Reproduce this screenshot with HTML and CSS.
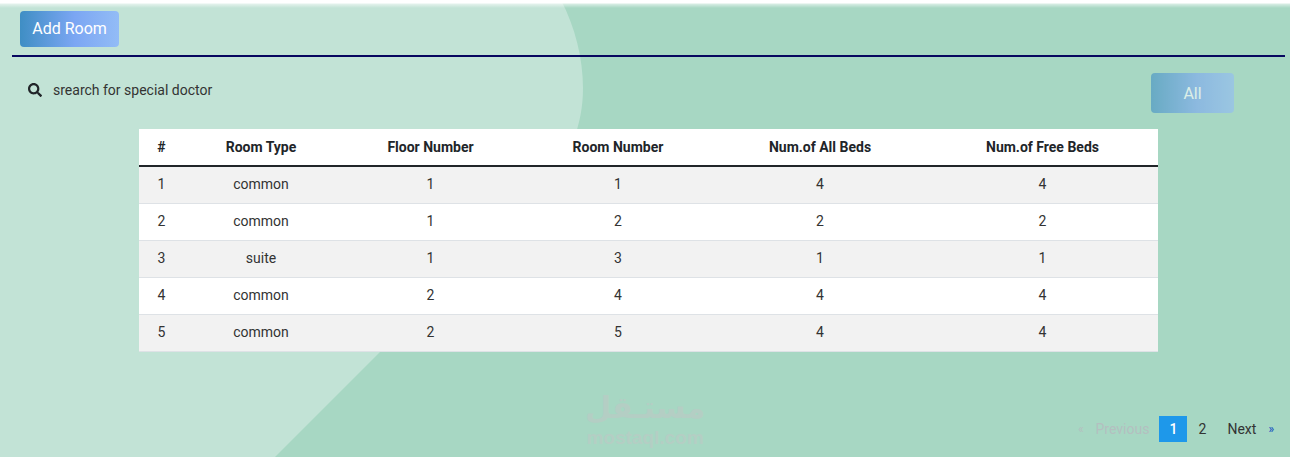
FILE: index.html
```html
<!DOCTYPE html>
<html lang="en">
<head>
  <meta charset="UTF-8" />
  <meta name="viewport" content="width=device-width, initial-scale=1.0" />
  <title>Rooms</title>
  <link rel="stylesheet" href="styles.css">
</head>
<body>
  <svg class="bg-shape" width="1290" height="457" viewBox="0 0 1290 457">
    <path d="M0 0H561C575 27 583 58 583 88C583 125 570 158 540 196L380 352L275 457H0Z" fill="#c2e3d6" />
  </svg>
  <div class="top-strip"></div>

  <div class="page">
    <div class="toolbar">
      <button class="btn-add">Add Room</button>
    </div>
    <hr class="divider" />

    <div class="search-row">
      <div class="search">
        <svg class="search-icon" width="14" height="14" viewBox="0 0 512 512">
          <path fill="#212529" d="M505 442.700L405.300 343c-4.500-4.500-10.600-7-17-7H372c27.600-35.300 44-79.700 44-128C416 93.100 322.900 0 208 0S0 93.100 0 208s93.100 208 208 208c48.300 0 92.700-16.400 128-44v16.300c0 6.400 2.500 12.500 7 17l99.700 99.700c9.400 9.400 24.600 9.400 33.900 0l28.300-28.300c9.400-9.400 9.400-24.600.1-34zM208 336c-70.700 0-128-57.200-128-128 0-70.700 57.200-128 128-128 70.700 0 128 57.200 128 128 0 70.700-57.200 128-128 128z" />
        </svg>
        <span class="search-text">srearch for special doctor</span>
      </div>
      <button class="btn-all">All</button>
    </div>

    <table class="rooms">
      <thead>
        <tr>
          <th>#</th>
          <th>Room Type</th>
          <th>Floor Number</th>
          <th>Room Number</th>
          <th>Num.of All Beds</th>
          <th>Num.of Free Beds</th>
        </tr>
      </thead>
      <tbody>
        <tr><td>1</td><td>common</td><td>1</td><td>1</td><td>4</td><td>4</td></tr>
        <tr><td>2</td><td>common</td><td>1</td><td>2</td><td>2</td><td>2</td></tr>
        <tr><td>3</td><td>suite</td><td>1</td><td>3</td><td>1</td><td>1</td></tr>
        <tr><td>4</td><td>common</td><td>2</td><td>4</td><td>4</td><td>4</td></tr>
        <tr><td>5</td><td>common</td><td>2</td><td>5</td><td>4</td><td>4</td></tr>
      </tbody>
    </table>

    <div class="pagination">
      <span class="page-arrow disabled">«</span>
      <span class="page-link prev disabled">Previous</span>
      <span class="page-num active">1</span>
      <span class="page-num wide">2</span>
      <span class="page-link next">Next</span>
      <span class="page-arrow">»</span>
    </div>
  </div>

  <div class="watermark">
    <div class="wm-logo" lang="ar" dir="rtl">مستـقل</div>
    <div class="wm-site">mostaql.com</div>
  </div>
</body>
</html>
```

FILE: styles.css
```css
* {
  box-sizing: border-box;
}
html, body {
  height: 100%;
}
body {
  font-family: 'Roboto', sans-serif;
  font-size: 14px;
  margin: 0;
  overflow: hidden;
  position: relative;
  color: #212529;
  background: #a7d7c3;
}
.bg-shape {
  position: absolute;
  top: 0;
  left: 0;
}
.top-strip {
  position: absolute;
  top: 0;
  left: 0;
  right: 0;
  height: 8px;
  background: linear-gradient(to bottom, #fff 0, #fff 3px, rgba(255, 255, 255, 0.55) 4px, rgba(255, 255, 255, 0) 8px);
}
.page {
  position: relative;
  padding-top: 11px;
}
.toolbar {
  padding-left: 20px;
  height: 44px;
}
.btn-add {
  display: block;
  width: 99px;
  height: 36px;
  padding: 0 0 2px;
  border: none;
  border-radius: 4px;
  font-family: 'Roboto', sans-serif;
  font-size: 16px;
  color: #fff;
  background: linear-gradient(to right, #3f8ec4, #7ba6f3 55%, #93bcf6);
}
.divider {
  margin: 0 5px 0 12px;
  border: none;
  height: 2px;
  background: #07075f;
}
.search-row {
  display: flex;
  justify-content: space-between;
  align-items: flex-start;
  height: 72px;
  padding: 16px 56px 0 28px;
}
.search {
  display: flex;
  align-items: center;
  gap: 11px;
  height: 34px;
}
.search-text {
  color: #333;
}
.btn-all {
  width: 83px;
  height: 40px;
  padding: 0;
  border: none;
  border-radius: 4px;
  font-family: 'Roboto', sans-serif;
  font-size: 16px;
  color: #fff;
  background: linear-gradient(to right, #3f8ec4, #7ba6f3 55%, #93bcf6);
  opacity: 0.6;
}
.rooms {
  width: 1019px;
  margin-left: 139px;
  border-collapse: collapse;
  table-layout: fixed;
  background: #fff;
}
.rooms th, .rooms td {
  text-align: center;
  padding: 0;
}
.rooms th {
  height: 37px;
  padding-bottom: 1px;
  font-weight: 700;
  color: #212529;
  border-bottom: 2px solid #212529;
}
.rooms td {
  height: 37px;
  padding-bottom: 2px;
  color: #333;
  border-bottom: 1px solid #dee2e6;
}
.rooms tbody tr:nth-child(odd) {
  background: #f2f2f2;
}
.rooms th:nth-child(1) { width: 45px; }
.rooms th:nth-child(2) { width: 154px; }
.rooms th:nth-child(3) { width: 185px; }
.rooms th:nth-child(4) { width: 190px; }
.rooms th:nth-child(5) { width: 214px; }
.pagination {
  display: flex;
  justify-content: flex-end;
  align-items: center;
  height: 26px;
  margin-top: 64px;
  padding-right: 16px;
  color: #333;
}
.page-link.prev {
  padding: 0 10px 0 12px;
}
.page-link.next {
  padding: 0 12px 0 10px;
}
.page-arrow {
  font-size: 12px;
  color: #0d47c0;
}
.page-num {
  width: 28px;
  height: 26px;
  line-height: 26px;
  text-align: center;
}
.page-num.wide {
  width: 30px;
}
.page-num.active {
  color: #fff;
  font-weight: 500;
  background: #1e98ea;
}
.disabled {
  color: #b4bfc0;
}
.watermark {
  position: absolute;
  left: 584px;
  top: 390px;
  width: 122px;
  text-align: center;
  color: #b4cec4;
}
.wm-logo {
  font-family: 'DejaVu Sans', sans-serif;
  font-weight: 700;
  font-size: 30px;
  line-height: 36px;
  height: 36px;
  white-space: nowrap;
}
.wm-site {
  font-family: 'Liberation Sans', sans-serif;
  font-weight: 700;
  font-size: 19px;
  line-height: 18px;
  margin-top: 3px;
}
```
